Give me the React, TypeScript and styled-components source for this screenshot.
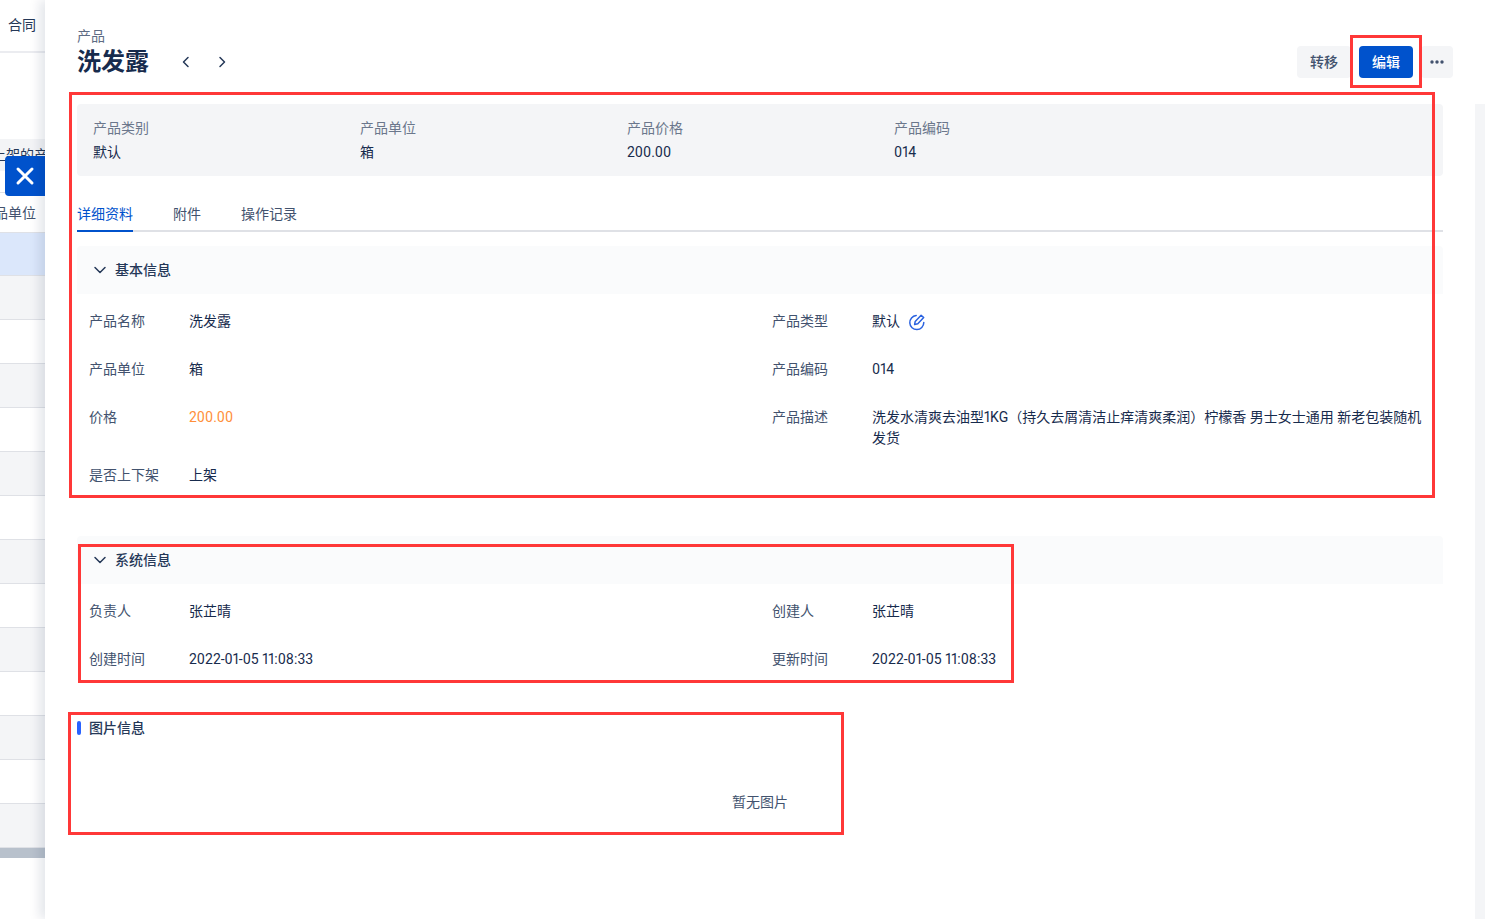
import React from "react";
import styled, { createGlobalStyle } from "styled-components";

const Global = createGlobalStyle`
  html, body { margin: 0; padding: 0; background: #fff; height: 100%; overflow: hidden; }
  * { box-sizing: border-box; }
  body { font-family: Roboto, "Noto Sans CJK SC", sans-serif; font-size: 14px; color: #172b4d; font-feature-settings: "pnum"; }
`;

const Page = styled.div`
  position: relative;
  display: flex;
  width: 1485px;
  height: 919px;
  overflow: hidden;
`;

/* List page showing behind the drawer */
const Behind = styled.aside`
  position: relative;
  flex: 0 0 45px;
  width: 45px;
  overflow: hidden;
  display: flex;
  flex-direction: column;
`;
const TopBar = styled.div`
  height: 53px;
  flex: none;
  padding-left: 8px;
  line-height: 50px;
  border-bottom: 2px solid #ebecf0;
  white-space: nowrap;
  color: #253858;
`;
const Notice = styled.div`
  margin-top: 86px;
  height: 32px;
  flex: none;
  background: #f3f4f6;
  display: flex;
  justify-content: flex-end;
  white-space: nowrap;
  line-height: 32px;
  color: #253858;
`;
const NoticeText = styled.span`
  flex: none;
  margin-right: -3px;
`;
const ListHead = styled.div`
  margin-top: 21px;
  height: 41px;
  flex: none;
  border-top: 1px solid #dfe1e6;
  border-bottom: 1px solid #dfe1e6;
  display: flex;
  justify-content: flex-end;
  align-items: center;
  padding: 0 9px 1px 0;
  white-space: nowrap;
  color: #42526e;
`;
const HeadText = styled.span`
  flex: none;
`;
const ListRow = styled.div<{ $tone: "selected" | "odd" | "even" }>`
  height: ${(p) => (p.$tone === "selected" ? "43px" : "44px")};
  flex: none;
  border-bottom: 1px solid #dfe1e6;
  background: ${(p) => (p.$tone === "selected" ? "#dbe7fb" : p.$tone === "odd" ? "#f4f5f7" : "#ffffff")};
`;
const ScrollTrack = styled.div`
  height: 10px;
  flex: none;
  background: #b8c1cc;
`;
const CloseButton = styled.button`
  position: absolute;
  left: 5px;
  top: 156px;
  width: 40px;
  height: 40px;
  border: 0;
  padding: 0;
  background: #0052cc;
  border-radius: 4px 0 0 4px;
  display: flex;
  align-items: center;
  justify-content: center;
`;

/* Drawer */
const Drawer = styled.main`
  flex: 1;
  display: flex;
  background: #fff;
  box-shadow: -6px 0 10px rgba(9, 30, 66, 0.1);
  z-index: 1;
`;
const DrawerBody = styled.div`
  flex: 0 0 1430px;
  padding: 26px 32px 0;
`;
const Gutter = styled.div`
  flex: 0 0 10px;
  margin-top: 104px;
  background: #f4f5f7;
`;
const Header = styled.header`
  display: flex;
  align-items: flex-end;
  justify-content: space-between;
  margin-right: -10px;
  margin-bottom: 26px;
`;
const TitleBlock = styled.div`
  display: flex;
  flex-direction: column;
`;
const Crumb = styled.div`
  font-size: 14px;
  line-height: 20px;
  color: #5e6c84;
`;
const TitleRow = styled.div`
  display: flex;
  align-items: center;
  height: 32px;
`;
const Title = styled.h1`
  margin: 0;
  font-size: 24px;
  line-height: 32px;
  font-weight: 700;
  color: #172b4d;
  width: 72px;
`;
const Pager = styled.div`
  display: flex;
  margin-left: 29px;
  gap: 20px;
  color: #253858;
`;
const PagerButton = styled.span`
  width: 16px;
  height: 16px;
  display: flex;
`;
const Actions = styled.div`
  display: flex;
  gap: 8px;
`;
const ActionButton = styled.button<{ $primary?: boolean; $square?: boolean }>`
  height: 32px;
  width: ${(p) => (p.$square ? "32px" : "54px")};
  border: 0;
  padding: 0;
  border-radius: 4px;
  font: inherit;
  font-weight: 500;
  background: ${(p) => (p.$primary ? "#0052cc" : "#f4f5f7")};
  color: ${(p) => (p.$primary ? "#fff" : "#42526e")};
  display: flex;
  align-items: center;
  justify-content: center;
`;
const ActionLabel = styled.span`
  line-height: 20px;
  margin-top: -1px;
`;

const Summary = styled.section`
  height: 72px;
  background: #f4f5f7;
  border-radius: 4px;
  padding: 13px 16px 0;
  display: grid;
  grid-template-columns: repeat(4, 267px);
`;
const SummaryItem = styled.div`
  display: flex;
  flex-direction: column;
  gap: 2px;
`;
const SummaryLabel = styled.div`
  line-height: 22px;
  color: #6b778c;
`;
const SummaryValue = styled.div`
  line-height: 22px;
  color: #172b4d;
`;

const Tabs = styled.nav`
  margin-top: 22px;
  height: 34px;
  display: flex;
  gap: 40px;
  border-bottom: 2px solid #dfe1e6;
`;
const Tab = styled.div<{ $active?: boolean }>`
  height: 34px;
  line-height: 32px;
  color: ${(p) => (p.$active ? "#0052cc" : "#42526e")};
  border-bottom: 2px solid ${(p) => (p.$active ? "#0052cc" : "transparent")};
`;

const Section = styled.section<{ $top: number }>`
  margin-top: ${(p) => p.$top}px;
`;
const SectionHead = styled.div`
  height: 48px;
  background: #fafbfc;
  border-radius: 4px 4px 0 0;
  display: flex;
  align-items: center;
  padding-left: 15px;
  gap: 7px;
  font-weight: 500;
  color: #253858;
`;
const SectionLabel = styled.span`
  line-height: 20px;
  margin-top: -1px;
`;
const Fields = styled.div<{ $rows: string }>`
  margin-top: 11px;
  display: grid;
  grid-template-columns: 683px 1fr;
  grid-template-rows: ${(p) => p.$rows};
  row-gap: 16px;
  padding: 0 12px;
`;
const Field = styled.div`
  display: grid;
  grid-template-columns: 100px 1fr;
  align-items: start;
  padding-top: 6px;
  line-height: 21px;
`;
const FieldLabel = styled.div`
  color: #42526e;
`;
const FieldValue = styled.div<{ $accent?: boolean }>`
  color: ${(p) => (p.$accent ? "#ff8f3a" : "#172b4d")};
  display: flex;
  align-items: center;
  gap: 8px;
`;
const EditIcon = styled.svg`
  width: 18px;
  height: 18px;
  flex: none;
`;

const ImageSection = styled.section`
  margin-top: 45px;
`;
const ImageTitle = styled.div`
  height: 16px;
  display: flex;
  align-items: center;
  gap: 8px;
  font-weight: 500;
  color: #253858;
  line-height: 16px;
`;
const AccentBar = styled.span`
  width: 4px;
  height: 14px;
  border-radius: 2px;
  background: #2962ff;
`;
const EmptyText = styled.div`
  margin-top: 55px;
  text-align: center;
  line-height: 22px;
  color: #42526e;
`;

/* Review annotations drawn over the screenshot */
const Annotation = styled.div<{ $x: number; $y: number; $w: number; $h: number }>`
  position: absolute;
  left: ${(p) => p.$x}px;
  top: ${(p) => p.$y}px;
  width: ${(p) => p.$w}px;
  height: ${(p) => p.$h}px;
  border: 3px solid #ff3838;
  pointer-events: none;
  z-index: 2;
`;

const Chevron = ({ d }: { d: string }) => (
  <svg width="16" height="16" viewBox="0 0 16 16" fill="none" stroke="currentColor" strokeWidth="1.5" strokeLinecap="round" strokeLinejoin="round">
    <path d={d} />
  </svg>
);

const rows: ("selected" | "odd" | "even")[] = ["selected", "odd", "even", "odd", "even", "odd", "even", "odd", "even", "odd", "even", "odd", "even", "odd"];

const summary = [
  ["产品类别", "默认"],
  ["产品单位", "箱"],
  ["产品价格", "200.00"],
  ["产品编码", "014"],
];

export default function App() {
  return (
    <Page>
      <Global />
      <Behind>
        <TopBar>合同</TopBar>
        <Notice>
          <NoticeText>上架的产</NoticeText>
        </Notice>
        <ListHead>
          <HeadText>产品单位</HeadText>
        </ListHead>
        {rows.map((tone, i) => (
          <ListRow key={i} $tone={tone} />
        ))}
        <ScrollTrack />
        <CloseButton aria-label="关闭">
          <svg width="20" height="20" viewBox="0 0 20 20" fill="none" stroke="#fff" strokeWidth="3" strokeLinecap="round">
            <path d="M3 3l14 14M17 3L3 17" />
          </svg>
        </CloseButton>
      </Behind>

      <Drawer>
        <DrawerBody>
          <Header>
            <TitleBlock>
              <Crumb>产品</Crumb>
              <TitleRow>
                <Title>洗发露</Title>
                <Pager>
                  <PagerButton>
                    <Chevron d="M10 3.5L5.5 8l4.5 4.5" />
                  </PagerButton>
                  <PagerButton>
                    <Chevron d="M6 3.5L10.5 8 6 12.5" />
                  </PagerButton>
                </Pager>
              </TitleRow>
            </TitleBlock>
            <Actions>
              <ActionButton>
                <ActionLabel>转移</ActionLabel>
              </ActionButton>
              <ActionButton $primary>
                <ActionLabel>编辑</ActionLabel>
              </ActionButton>
              <ActionButton $square aria-label="更多">
                <svg width="14" height="4" viewBox="0 0 14 4" fill="#42526e">
                  <circle cx="2" cy="2" r="1.7" />
                  <circle cx="7" cy="2" r="1.7" />
                  <circle cx="12" cy="2" r="1.7" />
                </svg>
              </ActionButton>
            </Actions>
          </Header>

          <Summary>
            {summary.map(([label, value]) => (
              <SummaryItem key={label}>
                <SummaryLabel>{label}</SummaryLabel>
                <SummaryValue>{value}</SummaryValue>
              </SummaryItem>
            ))}
          </Summary>

          <Tabs>
            <Tab $active>详细资料</Tab>
            <Tab>附件</Tab>
            <Tab>操作记录</Tab>
          </Tabs>

          <Section $top={14}>
            <SectionHead>
              <Chevron d="M3 5.5L8 10.5l5-5" />
              <SectionLabel>基本信息</SectionLabel>
            </SectionHead>
            <Fields $rows="32px 32px 42px 32px">
              <Field>
                <FieldLabel>产品名称</FieldLabel>
                <FieldValue>洗发露</FieldValue>
              </Field>
              <Field>
                <FieldLabel>产品类型</FieldLabel>
                <FieldValue>
                  默认
                  <EditIcon viewBox="0 0 18 18" fill="none" stroke="#2a62e0" strokeWidth="1.5" strokeLinecap="round" strokeLinejoin="round">
                    <path d="M8.2 2.6A7 7 0 1 0 15.8 9.6" />
                    <path d="M6.6 11.6l.6-3.2 5.9-6.2 2.6 2.4-5.9 6.2-3.2.8z" />
                  </EditIcon>
                </FieldValue>
              </Field>
              <Field>
                <FieldLabel>产品单位</FieldLabel>
                <FieldValue>箱</FieldValue>
              </Field>
              <Field>
                <FieldLabel>产品编码</FieldLabel>
                <FieldValue>014</FieldValue>
              </Field>
              <Field>
                <FieldLabel>价格</FieldLabel>
                <FieldValue $accent>200.00</FieldValue>
              </Field>
              <Field>
                <FieldLabel>产品描述</FieldLabel>
                <FieldValue>洗发水清爽去油型1KG（持久去屑清洁止痒清爽柔润）柠檬香 男士女士通用 新老包装随机发货</FieldValue>
              </Field>
              <Field>
                <FieldLabel>是否上下架</FieldLabel>
                <FieldValue>上架</FieldValue>
              </Field>
            </Fields>
          </Section>

          <Section $top={45}>
            <SectionHead>
              <Chevron d="M3 5.5L8 10.5l5-5" />
              <SectionLabel>系统信息</SectionLabel>
            </SectionHead>
            <Fields $rows="32px 32px">
              <Field>
                <FieldLabel>负责人</FieldLabel>
                <FieldValue>张芷晴</FieldValue>
              </Field>
              <Field>
                <FieldLabel>创建人</FieldLabel>
                <FieldValue>张芷晴</FieldValue>
              </Field>
              <Field>
                <FieldLabel>创建时间</FieldLabel>
                <FieldValue>2022-01-05 11:08:33</FieldValue>
              </Field>
              <Field>
                <FieldLabel>更新时间</FieldLabel>
                <FieldValue>2022-01-05 11:08:33</FieldValue>
              </Field>
            </Fields>
          </Section>

          <ImageSection>
            <ImageTitle>
              <AccentBar />
              图片信息
            </ImageTitle>
            <EmptyText>暂无图片</EmptyText>
          </ImageSection>
        </DrawerBody>
        <Gutter />
      </Drawer>

      <Annotation $x={1350} $y={35} $w={72} $h={53} />
      <Annotation $x={69} $y={92} $w={1366} $h={406} />
      <Annotation $x={78} $y={544} $w={936} $h={139} />
      <Annotation $x={68} $y={712} $w={776} $h={123} />
    </Page>
  );
}
